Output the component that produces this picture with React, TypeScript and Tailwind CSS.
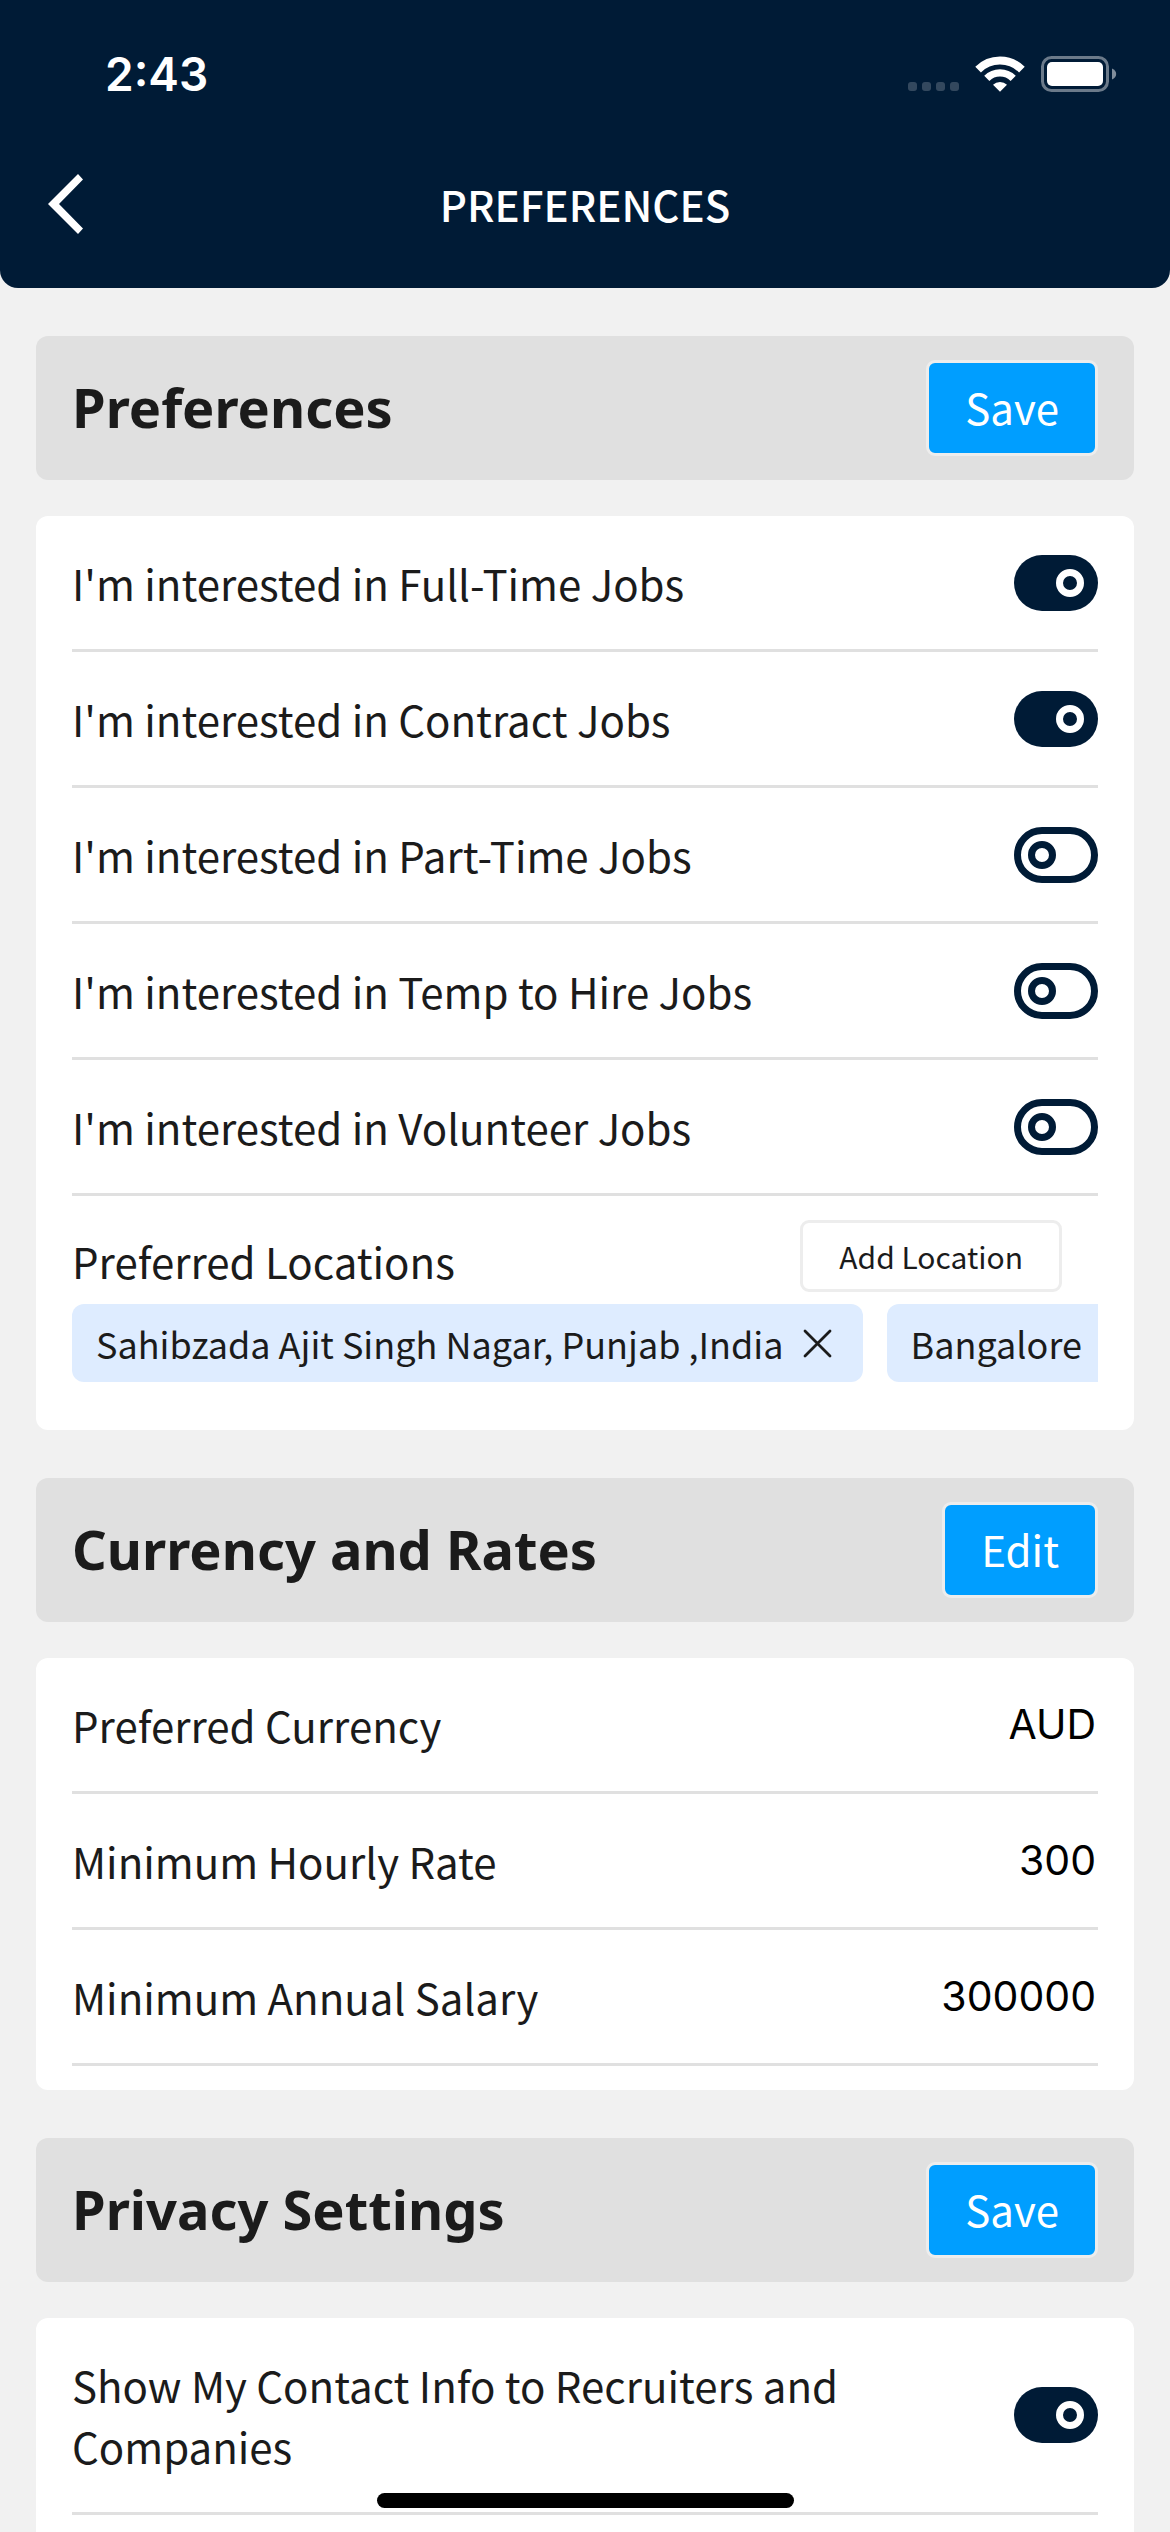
import React, { ReactNode } from "react";

function Toggle({ on }: { on: boolean }) {
  return (
    <svg className="h-[56px] w-[84px] shrink-0" viewBox="0 0 84 56" role="switch" aria-checked={on}>
      {on ? (
        <>
          <rect width="84" height="56" rx="28" fill="#001b36" />
          <circle cx="56" cy="28" r="10.5" fill="none" stroke="#fff" strokeWidth="7" />
        </>
      ) : (
        <>
          <rect x="3.5" y="3.5" width="77" height="49" rx="24.5" fill="none" stroke="#001b36" strokeWidth="7" />
          <circle cx="28" cy="28" r="10.5" fill="none" stroke="#001b36" strokeWidth="7" />
        </>
      )}
    </svg>
  );
}

function SectionHeader({ title, action }: { title: string; action: string }) {
  return (
    <div className="flex h-[144px] items-center justify-between rounded-xl bg-[#e0e0e0] px-9">
      <h2 className="pb-0.5 font-['Noto_Sans',sans-serif] text-[54.2px] leading-[70px] font-bold">{title}</h2>
      <button className="flex h-24 items-center rounded-[9px] border-3 border-[#ededed] bg-[#009eff] px-9 pb-[3px] text-white">
        {action}
      </button>
    </div>
  );
}

function Card({ children, className = "" }: { children: ReactNode; className?: string }) {
  return <div className={`mt-9 rounded-xl bg-white px-9 ${className}`}>{children}</div>;
}

function Row({ label, children }: { label: string; children: ReactNode }) {
  return (
    <div className="flex items-center justify-between border-b-3 border-[#e0e0e0] py-9">
      <span className="w-[800px]">{label}</span>
      <div className="-my-4 flex items-center">{children}</div>
    </div>
  );
}

function Chip({ text }: { text: string }) {
  return (
    <div className="flex h-[78px] shrink-0 items-center rounded-xl bg-[#deecff] pr-[31px] pl-6 text-[36px]">
      <span className="whitespace-nowrap">{text}</span>
      <svg className="ml-[19px] size-[29px]" viewBox="0 0 29 29" stroke="#1b1b1b" strokeWidth="2.8" strokeLinecap="round">
        <path d="M2 2 27 27M27 2 2 27" />
      </svg>
    </div>
  );
}

function StatusIcons() {
  return (
    <div className="flex items-center">
      <div className="mt-[25px] flex gap-[5px]">
        {[0, 1, 2, 3].map((i) => (
          <span key={i} className="size-[9px] rounded-[3px] bg-white/20" />
        ))}
      </div>
      <svg className="ml-[16px] h-[38px] w-[50px]" viewBox="974 54 50 38" fill="none" stroke="#fff">
        <path d="M977.1 68.6A31 31 0 0 1 1020.9 68.6" strokeWidth="8" />
        <path d="M985.8 77.3A18.7 18.7 0 0 1 1012.2 77.3" strokeWidth="7.3" />
        <path d="M999 90.8 992 83.8A10 10 0 0 1 1006 83.8Z" fill="#fff" stroke="none" />
      </svg>
      <svg className="ml-[16px] h-9 w-[76px]" viewBox="0 0 76 36">
        <rect x="1.5" y="1.5" width="65" height="33" rx="9" fill="none" stroke="#fff" strokeOpacity=".42" strokeWidth="3" />
        <rect x="6" y="6" width="56" height="24" rx="5" fill="#fff" />
        <path d="M71 12.5C73.6 13.6 75.2 15.7 75.2 18S73.6 22.4 71 23.5Z" fill="#fff" fillOpacity=".5" />
      </svg>
    </div>
  );
}

const jobTypes = [
  { label: "I'm interested in Full-Time Jobs", on: true },
  { label: "I'm interested in Contract Jobs", on: true },
  { label: "I'm interested in Part-Time Jobs", on: false },
  { label: "I'm interested in Temp to Hire Jobs", on: false },
  { label: "I'm interested in Volunteer Jobs", on: false },
];

const rates = [
  { label: "Preferred Currency", value: "AUD" },
  { label: "Minimum Hourly Rate", value: "300" },
  { label: "Minimum Annual Salary", value: "300000" },
];

export default function App() {
  return (
    <div className="relative h-[2532px] w-[1170px] overflow-hidden bg-[#f1f1f1] font-['Noto_Sans_CJK_SC',sans-serif] text-[42px] leading-[61px] text-[#1b1b1b]">
      <header className="h-[288px] rounded-b-[18px] bg-[#001b36] text-white">
        <div className="flex h-[148px] items-center justify-between pr-[53px] pl-[105px]">
          <span className="font-['Inter',sans-serif] text-[46px] font-semibold">2:43</span>
          <StatusIcons />
        </div>
        <div className="grid h-[112px] grid-cols-[1fr_auto_1fr] items-center px-12">
          <svg className="h-[60px] w-[35px]" viewBox="0 0 35 60" fill="#fff">
            <path d="M30 0 35 5.500 11 30 35 54.500 30 60 0 30Z" />
          </svg>
          <h1 className="pb-0.5 font-medium">PREFERENCES</h1>
        </div>
      </header>

      <main className="flex flex-col gap-12 px-9 pt-12">
        <section>
          <SectionHeader title="Preferences" action="Save" />
          <Card className="pb-12">
            {jobTypes.map((j) => (
              <Row key={j.label} label={j.label}>
                <Toggle on={j.on} />
              </Row>
            ))}
            <div className="flex items-start justify-between pt-6 pr-9">
              <span className="mt-[10px] -mb-2">Preferred Locations</span>
              <button className="flex h-[72px] items-center rounded-[9px] border-3 border-[#ededed] px-9 text-[30px]">
                Add Location
              </button>
            </div>
            <div className="mt-3 flex gap-6 overflow-hidden">
              <Chip text="Sahibzada Ajit Singh Nagar, Punjab ,India" />
              <Chip text="Bangalore" />
            </div>
          </Card>
        </section>

        <section>
          <SectionHeader title="Currency and Rates" action="Edit" />
          <Card className="pb-6">
            {rates.map((r) => (
              <Row key={r.label} label={r.label}>
                <span className="pr-0.5 font-['Inter',sans-serif] text-[41px] text-black">{r.value}</span>
              </Row>
            ))}
          </Card>
        </section>

        <section>
          <SectionHeader title="Privacy Settings" action="Save" />
          <Card className="pb-12">
            <Row label="Show My Contact Info to Recruiters and Companies">
              <Toggle on />
            </Row>
          </Card>
        </section>
      </main>

      <div className="absolute bottom-6 left-[377px] h-[15px] w-[417px] rounded-full bg-black" />
    </div>
  );
}
